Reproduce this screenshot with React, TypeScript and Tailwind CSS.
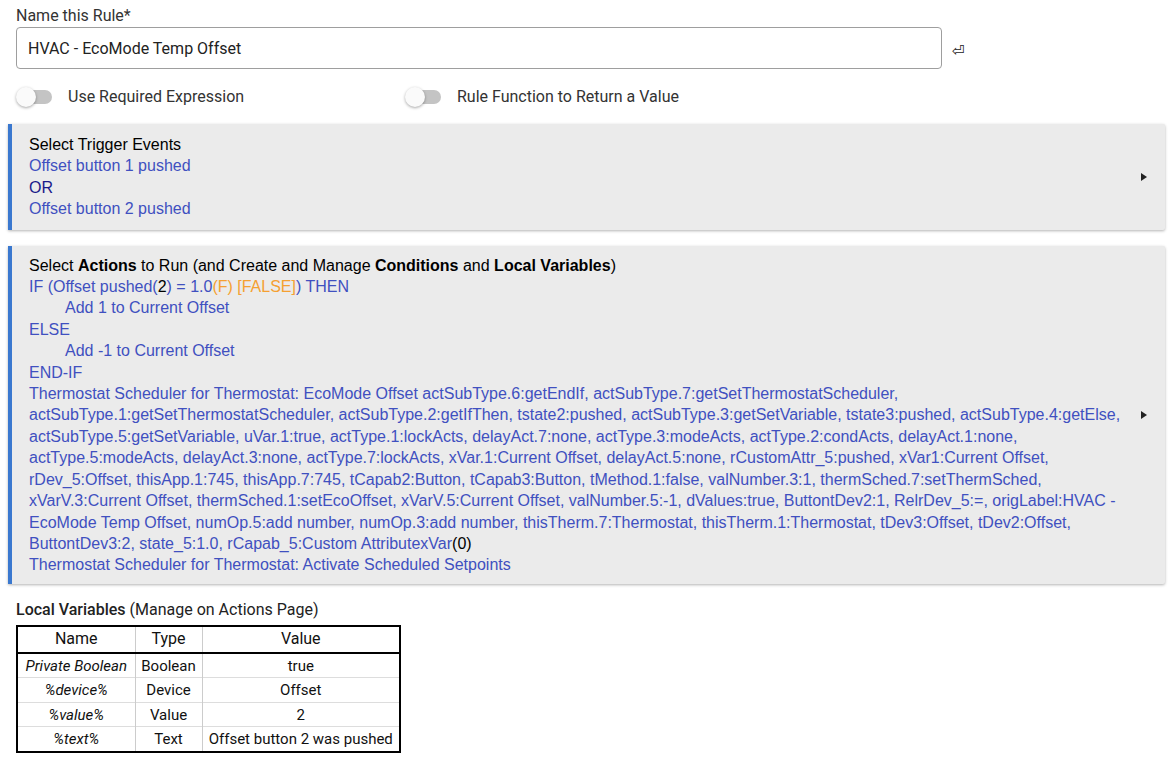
import React from "react"

const actionLines: React.ReactNode[] = [
  "Thermostat Scheduler for Thermostat: EcoMode Offset actSubType.6:getEndIf, actSubType.7:getSetThermostatScheduler,",
  "actSubType.1:getSetThermostatScheduler, actSubType.2:getIfThen, tstate2:pushed, actSubType.3:getSetVariable, tstate3:pushed, actSubType.4:getElse,",
  "actSubType.5:getSetVariable, uVar.1:true, actType.1:lockActs, delayAct.7:none, actType.3:modeActs, actType.2:condActs, delayAct.1:none,",
  "actType.5:modeActs, delayAct.3:none, actType.7:lockActs, xVar.1:Current Offset, delayAct.5:none, rCustomAttr_5:pushed, xVar1:Current Offset,",
  "rDev_5:Offset, thisApp.1:745, thisApp.7:745, tCapab2:Button, tCapab3:Button, tMethod.1:false, valNumber.3:1, thermSched.7:setThermSched,",
  "xVarV.3:Current Offset, thermSched.1:setEcoOffset, xVarV.5:Current Offset, valNumber.5:-1, dValues:true, ButtontDev2:1, RelrDev_5:=, origLabel:HVAC -",
  "EcoMode Temp Offset, numOp.5:add number, numOp.3:add number, thisTherm.7:Thermostat, thisTherm.1:Thermostat, tDev3:Offset, tDev2:Offset,",
]

const vars = [
  { name: "Private Boolean", type: "Boolean", value: "true" },
  { name: "%device%", type: "Device", value: "Offset" },
  { name: "%value%", type: "Value", value: "2" },
  { name: "%text%", type: "Text", value: "Offset button 2 was pushed" },
]

const Toggle = ({ label }: { label: string }) => (
  <div className="flex items-center">
    <div className="relative w-[36px] h-5 flex items-center">
      <div className="absolute left-[2px] w-[34px] h-[14px] rounded-full bg-[#c4c4c4]" />
      <div className="absolute left-0 w-5 h-5 rounded-full bg-[#fafafa] shadow-[0_1px_3px_rgba(0,0,0,0.35)]" />
    </div>
    <span className="ml-4 text-[16px] text-[#333]">{label}</span>
  </div>
)

const Arrow = () => (
  <svg width="8" height="10" viewBox="0 0 8 10" className="shrink-0">
    <polygon points="1,1 7,5 1,9" fill="#222" />
  </svg>
)

const Card = ({ children, pad }: { children: React.ReactNode; pad: string }) => (
  <div className={"mx-2 flex items-center bg-[#ebebeb] border-l-4 border-[#3a78cf] rounded-r-[2px] shadow-[0_1px_3px_rgba(0,0,0,0.3)] pl-[17px] pr-[17px] " + pad}>
    <div className="flex-1 font-['Liberation_Sans',Arial,sans-serif] text-[16px] leading-[21.4px] text-[#4050c0]">
      {children}
    </div>
    <Arrow />
  </div>
)

export default function App() {
  return (
    <div className="w-[1173px] h-[760px] bg-white font-['Roboto',sans-serif] overflow-hidden">
      <div className="px-4 pt-[6px]">
        <div className="text-[16px] text-[#333] leading-[20px]">Name this Rule*</div>
        <div className="flex items-center mt-[1px]">
          <div className="w-[926px] h-[42px] border border-[#9e9e9e] rounded-[4px] flex items-center px-[11px] pt-[1px] text-[16px] text-[#222]">
            HVAC - EcoMode Temp Offset
          </div>
          <span className="ml-[10px] mt-[7px] text-[15px] text-[#222] font-['DejaVu_Sans',sans-serif]">⏎</span>
        </div>
        <div className="flex items-center mt-[18px] h-5">
          <div className="w-[389px]">
            <Toggle label="Use Required Expression" />
          </div>
          <Toggle label="Rule Function to Return a Value" />
        </div>
      </div>

      <div className="mt-[17px] flex flex-col gap-4">
        <Card pad="py-[10px]">
          <div className="text-black">Select Trigger Events</div>
          <div>Offset button 1 pushed</div>
          <div className="text-[#1a1a8a]">OR</div>
          <div>Offset button 2 pushed</div>
        </Card>

        <Card pad="pt-[9px] pb-[8px]">
          <div className="text-black">
            Select <b>Actions</b> to Run (and Create and Manage <b>Conditions</b> and <b>Local Variables</b>)
          </div>
          <div>
            IF (Offset pushed(<span className="text-black">2</span>) = 1.0
            <span className="text-[#f5a031]">(F) [FALSE]</span>) THEN
          </div>
          <div className="pl-[36px]">Add 1 to Current Offset</div>
          <div>ELSE</div>
          <div className="pl-[36px]">Add -1 to Current Offset</div>
          <div>END-IF</div>
          {actionLines.map((l, i) => (
            <div key={i} className="whitespace-nowrap">{l}</div>
          ))}
          <div className="whitespace-nowrap">
            ButtontDev3:2, state_5:1.0, rCapab_5:Custom AttributexVar<span className="text-black">(0)</span>
          </div>
          <div>Thermostat Scheduler for Thermostat: Activate Scheduled Setpoints</div>
        </Card>
      </div>

      <div className="px-4 mt-[16px]">
        <div className="text-[16px] text-[#222] leading-[20px]">
          <b className="font-medium">Local Variables</b> (Manage on Actions Page)
        </div>
        <table className="mt-[5px] border-2 border-black border-collapse text-[15px] text-[#111] text-center">
          <thead>
            <tr className="h-[27px] border-b-2 border-black">
              <th className="w-[118px] font-normal text-[16px] border-r border-[#ccc]">Name</th>
              <th className="w-[67px] font-normal text-[16px] border-r border-[#ccc]">Type</th>
              <th className="w-[198px] font-normal text-[16px]">Value</th>
            </tr>
          </thead>
          <tbody>
            {vars.map((v, i) => (
              <tr key={i} className={"h-[24px] " + (i < vars.length - 1 ? "border-b border-[#ddd]" : "")}>
                <td className="italic border-r border-[#ccc] px-1 pt-[1px]">{v.name}</td>
                <td className="border-r border-[#ccc] px-1 pt-[1px]">{v.type}</td>
                <td className="px-1 pt-[1px]">{v.value}</td>
              </tr>
            ))}
          </tbody>
        </table>
      </div>
    </div>
  )
}
